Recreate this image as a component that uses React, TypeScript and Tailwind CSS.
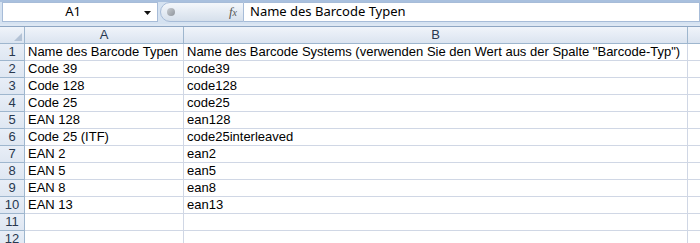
import React from "react";

const rows: [string, string][] = [
  ["Name des Barcode Typen", 'Name des Barcode Systems (verwenden Sie den Wert aus der Spalte "Barcode-Typ")'],
  ["Code 39", "code39"],
  ["Code 128", "code128"],
  ["Code 25", "code25"],
  ["EAN 128", "ean128"],
  ["Code 25 (ITF)", "code25interleaved"],
  ["EAN 2", "ean2"],
  ["EAN 5", "ean5"],
  ["EAN 8", "ean8"],
  ["EAN 13", "ean13"],
  ["", ""],
  ["", ""],
];

export default function App() {
  return (
    <div className="w-[700px] h-[243px] overflow-hidden bg-white font-['Liberation_Sans',Arial,sans-serif] text-[13px] text-black">
      {/* Formula bar */}
      <div className="h-[24px] bg-[#d5e2f1] border-t-2 border-[#a9c0de] flex items-start">
        <div className="ml-[2px] w-[156px] h-[20px] bg-white border border-[#a7bcd8] flex items-center relative">
          <span className="flex-1 text-center pr-[14px] font-['Noto_Sans',sans-serif] text-[13px]">A1</span>
          <svg className="absolute right-[6px] top-[8px]" width="7" height="4" viewBox="0 0 7 4">
            <polygon points="0,0 7,0 3.5,4" fill="#111" />
          </svg>
        </div>
        <div className="ml-[2px] w-[84px] h-[20px] rounded-l-full border border-[#a7bcd8] bg-gradient-to-b from-[#f4f7fb] to-[#d6e0ec] flex items-center">
          <span className="ml-[6px] w-[8px] h-[8px] rounded-full bg-gradient-to-br from-[#c8ccd2] to-[#8f959c]" />
          <span className="ml-auto mr-[6px] font-['Liberation_Serif',serif] italic text-[13px] text-[#555]">
            f<span className="text-[10px]">x</span>
          </span>
        </div>
        <div className="flex-1 h-[20px] bg-white border border-l-0 border-[#a7bcd8] flex items-center pl-[6px] font-['Noto_Sans',sans-serif] text-[13px]">
          Name des Barcode Typen
        </div>
      </div>
      <div className="h-[3px] bg-[#dde7f3] border-b border-[#8ea6c3]" />

      {/* Column headers */}
      <div className="flex h-[17px] bg-gradient-to-b from-[#f0f4fa] to-[#dbe4f0] border-b border-[#9eb6ce] text-[#28384f]">
        <div className="w-[25px] border-r border-[#9eb6ce] relative">
          <svg className="absolute right-[2px] bottom-[2px]" width="8" height="8" viewBox="0 0 8 8">
            <polygon points="8,0 8,8 0,8" fill="#b4c3d6" />
          </svg>
        </div>
        <div className="w-[159px] border-r border-[#9eb6ce] flex items-center justify-center">A</div>
        <div className="w-[504px] border-r border-[#9eb6ce] flex items-center justify-center">B</div>
        <div className="flex-1" />
      </div>

      {/* Rows */}
      {rows.map((r, i) => (
        <div key={i} className="flex h-[17px]">
          <div className="w-[25px] bg-gradient-to-b from-[#e8eef7] to-[#dfe7f2] border-r border-b border-[#9eb6ce] flex items-center justify-center text-[#28384f]">
            {i + 1}
          </div>
          <div className="w-[159px] border-r border-b border-[#d0d7e5] flex items-end pl-[3px] pb-[1px] leading-[15px] whitespace-nowrap">
            {r[0]}
          </div>
          <div className="w-[504px] border-r border-b border-[#d0d7e5] flex items-end pl-[3px] pb-[1px] leading-[15px] whitespace-nowrap">
            {r[1]}
          </div>
          <div className="flex-1 border-b border-[#d0d7e5]" />
        </div>
      ))}
    </div>
  );
}
